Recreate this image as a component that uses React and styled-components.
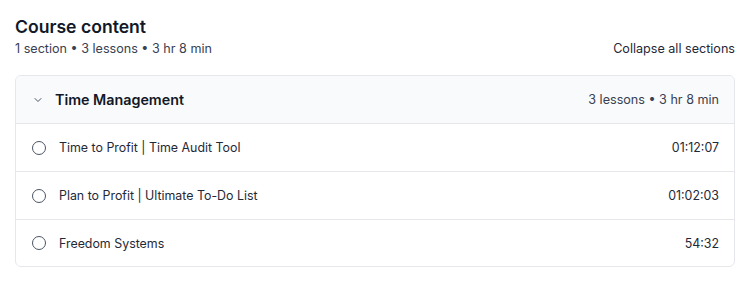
import React from "react";
import styled, { createGlobalStyle } from "styled-components";

const GlobalStyle = createGlobalStyle`
  body {
    margin: 0;
    background: #ffffff;
    font-family: Inter, "Noto Sans", sans-serif;
    color: #111827;
  }
`;

const lessons = [
  { title: "Time to Profit | Time Audit Tool", time: "01:12:07" },
  { title: "Plan to Profit | Ultimate To-Do List", time: "01:02:03" },
  { title: "Freedom Systems", time: "54:32" },
];

export default function App() {
  return (
    <Page>
      <GlobalStyle />
      <Title>Course content</Title>
      <SubRow>
        <Meta>1 section • 3 lessons • 3 hr 8 min</Meta>
        <CollapseButton>Collapse all sections</CollapseButton>
      </SubRow>
      <Card>
        <SectionHeader>
          <HeaderLeft>
            <svg width="10" height="10" viewBox="0 0 10 10" fill="none">
              <path d="M2 3.5 L5 6.5 L8 3.5" stroke="#4b5563" strokeWidth="1" strokeLinecap="round" strokeLinejoin="round" />
            </svg>
            <SectionTitle>Time Management</SectionTitle>
          </HeaderLeft>
          <SectionMeta>3 lessons • 3 hr 8 min</SectionMeta>
        </SectionHeader>
        {lessons.map((l) => (
          <LessonRow key={l.title}>
            <LessonLeft>
              <Circle />
              <LessonTitle>{l.title}</LessonTitle>
            </LessonLeft>
            <Duration>{l.time}</Duration>
          </LessonRow>
        ))}
      </Card>
    </Page>
  );
}

const Page = styled.div`
  padding: 14px 12px 0 15px;
`;

const Title = styled.h2`
  margin: 0;
  font-size: 17.6px;
  font-weight: 600;
  line-height: 26px;
  color: #111827;
`;

const SubRow = styled.div`
  display: flex;
  justify-content: space-between;
  align-items: center;
  margin-bottom: 17px;
`;

const Meta = styled.span`
  font-size: 12.6px;
  line-height: 18px;
  color: #374151;
`;

const CollapseButton = styled.button`
  border: none;
  background: none;
  padding: 0;
  font-family: inherit;
  font-size: 12.6px;
  line-height: 18px;
  color: #1f2937;
  cursor: pointer;
`;

const Card = styled.div`
  border: 1px solid #e5e7eb;
  border-radius: 6px;
  overflow: hidden;
`;

const SectionHeader = styled.div`
  display: flex;
  justify-content: space-between;
  align-items: center;
  height: 47px;
  padding: 0 15px 0 17px;
  background: #f9fafb;
  border-bottom: 1px solid #e5e7eb;
`;

const HeaderLeft = styled.div`
  display: flex;
  align-items: center;
  gap: 12px;
`;

const SectionTitle = styled.span`
  font-size: 14.3px;
  font-weight: 600;
  color: #111827;
`;

const SectionMeta = styled.span`
  font-size: 12.6px;
  color: #374151;
`;

const LessonRow = styled.div`
  display: flex;
  justify-content: space-between;
  align-items: center;
  height: 47px;
  padding: 0 15px 0 16px;
  border-bottom: 1px solid #e5e7eb;
  &:last-child {
    border-bottom: none;
    height: 46px;
  }
`;

const LessonLeft = styled.div`
  display: flex;
  align-items: center;
  gap: 13px;
`;

const Circle = styled.span`
  box-sizing: border-box;
  width: 14px;
  height: 14px;
  border: 1.4px solid #4b5563;
  border-radius: 50%;
`;

const LessonTitle = styled.span`
  font-size: 12.4px;
  color: #1f2937;
`;

const Duration = styled.span`
  font-size: 12.4px;
  color: #1f2937;
`;
